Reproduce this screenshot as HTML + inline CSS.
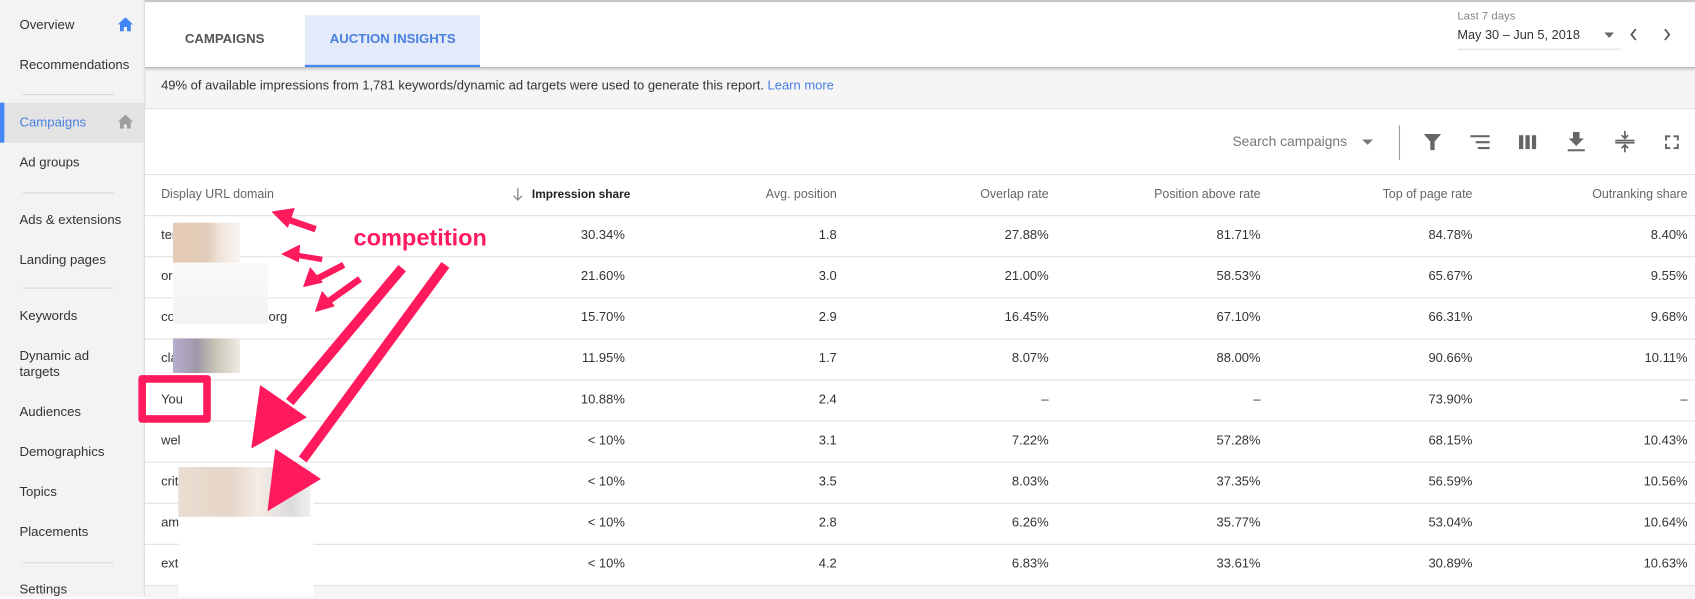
<!DOCTYPE html>
<html><head><meta charset="utf-8"><style>
*{margin:0;padding:0;box-sizing:border-box}
html,body{width:1695px;height:596px;overflow:hidden;background:#fff}
#w{position:absolute;left:0;top:0;width:1568px;height:552px;transform:scale(1.0811);transform-origin:0 0;font-family:"Liberation Sans",Arial,sans-serif;color:#333}
.a{position:absolute;white-space:nowrap;line-height:14px}
#side{position:absolute;left:0;top:0;width:134px;height:552px;background:#f3f3f3;border-right:1px solid #dadada}
.si{position:absolute;left:18px;font-size:12.2px;color:#333;line-height:15px;white-space:nowrap}
.dv{position:absolute;left:21px;width:84px;height:1px;background:#d6d6d6}
.hd{font-size:11.5px;color:#666}
.c{font-size:12px;color:#333;text-align:right}
.rl{position:absolute;left:134px;right:0;height:1px;background:#e0e0e0}
</style></head><body><div id="w">
<div id="side">
<div class="si" style="top:16px">Overview</div>
<svg class="a" style="left:109px;top:16px" width="14" height="13" viewBox="0 0 14 13"><path d="M7 0L0 6.5h2V13h3.5V9h3v4H12V6.5h2z" fill="#4285f4"/></svg>
<div class="si" style="top:53px">Recommendations</div>
<div class="dv" style="top:87px"></div>
<div style="position:absolute;left:0;top:95px;width:133px;height:37px;background:#e3e3e3;border-left:4px solid #4285f4"></div>
<div class="si" style="top:106px;color:#4a7fe0">Campaigns</div>
<svg class="a" style="left:109px;top:106px" width="14" height="13" viewBox="0 0 14 13"><path d="M7 0L0 6.5h2V13h3.5V9h3v4H12V6.5h2z" fill="#9e9e9e"/></svg>
<div class="si" style="top:143px">Ad groups</div>
<div class="dv" style="top:178px"></div>
<div class="si" style="top:196px">Ads &amp; extensions</div>
<div class="si" style="top:233px">Landing pages</div>
<div class="dv" style="top:266px"></div>
<div class="si" style="top:285px">Keywords</div>
<div class="si" style="top:322px">Dynamic ad<br>targets</div>
<div class="si" style="top:374px">Audiences</div>
<div class="si" style="top:411px">Demographics</div>
<div class="si" style="top:448px">Topics</div>
<div class="si" style="top:485px">Placements</div>
<div class="dv" style="top:520px"></div>
<div class="si" style="top:538px">Settings</div>
</div>

<div class="a" style="left:134px;top:0;right:0;height:2px;background:#c8c8c8"></div>
<div class="a" style="left:134px;top:62px;right:0;height:39px;background:#f5f5f5;border-top:1px solid #bbb;box-shadow:inset 0 2px 2px rgba(0,0,0,.12);border-bottom:1px solid #e0e0e0"></div>
<div class="a" style="left:171px;top:29px;font-size:12.2px;color:#555;font-weight:bold">CAMPAIGNS</div>
<div class="a" style="left:282px;top:14px;width:162px;height:48px;background:#e3ebfa;border-bottom:2px solid #4285f4"></div>
<div class="a" style="left:305px;top:29px;font-size:12.2px;color:#4a7fe0;font-weight:bold">AUCTION INSIGHTS</div>
<div class="a" style="left:1348px;top:8px;font-size:10.5px;color:#888">Last 7 days</div>
<div class="a" style="left:1348px;top:25px;font-size:11.8px;color:#333">May 30 – Jun 5, 2018</div>
<div class="a" style="left:1348px;top:45px;width:151px;height:1px;background:#ddd"></div>
<svg class="a" style="left:1484px;top:30px" width="9" height="5"><path d="M0 0h9L4.5 5z" fill="#666"/></svg>
<svg class="a" style="left:1506px;top:25px" width="10" height="14"><path d="M7 2L3 7l4 5" stroke="#555" stroke-width="1.6" fill="none"/></svg>
<svg class="a" style="left:1537px;top:25px" width="10" height="14"><path d="M3 2l4 5-4 5" stroke="#555" stroke-width="1.6" fill="none"/></svg>
<div class="a" style="left:149px;top:72px;font-size:12px;color:#333">49% of available impressions from 1,781 keywords/dynamic ad targets were used to generate this report. <span style="color:#4a7fe0">Learn more</span></div>

<div class="a" style="left:1140px;top:124px;font-size:12.8px;color:#777">Search campaigns</div>
<svg class="a" style="left:1260px;top:129px" width="10" height="5"><path d="M0 0h10L5 5z" fill="#777"/></svg>
<div class="a" style="left:1294px;top:116px;width:1px;height:32px;background:#999"></div>
<svg class="a" style="left:1317px;top:124px" width="16" height="15"><path d="M0 0h16l-6 7v8h-4V7z" fill="#666"/></svg>
<svg class="a" style="left:1360px;top:125px" width="18" height="13"><path d="M0 1h18M5 6.5h13M7 12h11" stroke="#666" stroke-width="2"/></svg>
<svg class="a" style="left:1405px;top:125px" width="16" height="13"><path d="M0 0h4v13H0zM6 0h4v13H6zM12 0h4v13h-4z" fill="#666"/></svg>
<svg class="a" style="left:1450px;top:122px" width="16" height="18"><path d="M5 0h6v6h4l-7 7-7-7h4z M0 16h16v2H0z" fill="#666"/></svg>
<svg class="a" style="left:1494px;top:121px" width="18" height="20"><path d="M0 9h18M0 11h18M9 0v6M6 4l3 3 3-3M9 20v-6M6 16l3-3 3 3" stroke="#666" stroke-width="1.6" fill="none"/></svg>
<svg class="a" style="left:1540px;top:125px" width="13" height="13"><path d="M1 5V1h4M8 1h4v4M12 8v4H8M5 12H1V8" stroke="#666" stroke-width="1.8" fill="none"/></svg>

<div class="rl" style="top:161px"></div>
<div class="a hd" style="left:149px;top:173px">Display URL domain</div>
<svg class="a" style="left:474px;top:174px" width="10" height="12"><path d="M5 0v11M1 7l4 4 4-4" stroke="#888" stroke-width="1.2" fill="none"/></svg>
<div class="a hd" style="left:492px;top:173px;color:#222;font-weight:bold;font-size:11px">Impression share</div>
<div class="a hd" style="right:794px;top:173px">Avg. position</div>
<div class="a hd" style="right:598px;top:173px">Overlap rate</div>
<div class="a hd" style="right:402px;top:173px">Position above rate</div>
<div class="a hd" style="right:206px;top:173px">Top of page rate</div>
<div class="a hd" style="right:7px;top:173px">Outranking share</div>

<div id="rows"></div>
<script>
var d=[["ter","30.34%","1.8","27.88%","81.71%","84.78%","8.40%"],["or","21.60%","3.0","21.00%","58.53%","65.67%","9.55%"],["co                         .org","15.70%","2.9","16.45%","67.10%","66.31%","9.68%"],["cla","11.95%","1.7","8.07%","88.00%","90.66%","10.11%"],["You","10.88%","2.4","–","–","73.90%","–"],["wel","< 10%","3.1","7.22%","57.28%","68.15%","10.43%"],["crit","< 10%","3.5","8.03%","37.35%","56.59%","10.56%"],["am","< 10%","2.8","6.26%","35.77%","53.04%","10.64%"],["ext","< 10%","4.2","6.83%","33.61%","30.89%","10.63%"]];
var r=[990,794,598,402,206,7],h="";
d.forEach(function(x,i){var t=199+i*38;h+='<div class="rl" style="top:'+t+'px"></div>';
h+='<div class="a c" style="left:149px;top:'+(t+11)+'px;text-align:left;white-space:pre">'+x[0]+'</div>';
for(var j=1;j<7;j++)h+='<div class="a c" style="right:'+r[j-1]+'px;top:'+(t+11)+'px">'+x[j]+'</div>';});
h+='<div class="rl" style="top:541px"></div><div class="a" style="left:134px;top:542px;right:0;height:12px;background:#f5f5f5"></div>';
document.getElementById("rows").innerHTML=h;
</script>

<div class="a" style="left:160px;top:206px;width:62px;height:37px;background:linear-gradient(90deg,#e6cdb8 0,#e2cbb8 50%,#f0e4da 70%,#f8f4f0 100%)"></div>
<div class="a" style="left:160px;top:243px;width:88px;height:57px;background:linear-gradient(#fafafa,#f2f2f2)"></div>
<div class="a" style="left:160px;top:313px;width:62px;height:32px;background:linear-gradient(90deg,#b9aece 0,#9f98a8 35%,#c9c7b5 65%,#eeeae6 100%)"></div>
<div class="a" style="left:165px;top:452px;width:125px;height:100px;background:#fff"></div>
<div class="a" style="left:165px;top:432px;width:122px;height:46px;background:linear-gradient(90deg,#eadcd0 0,#e6d6c9 40%,#f4ece5 60%,#dcdbdc 85%,#eef0f0 100%)"></div>

<div class="a" style="left:128px;top:347px;width:67px;height:44px;border:7px solid #ff1a5e;border-radius:3px;background:#fff"></div>
<div class="a" style="left:149px;top:362px;font-size:12px">You</div>

<svg class="a" style="left:0;top:0" width="1568" height="552">
<g fill="#ff1a5e" stroke="#ff1a5e" stroke-linejoin="round">
<path d="M292 212L266 203" stroke-width="6"/><path d="M252 196l20-3-6 17z"/>
<path d="M298 240L274 236" stroke-width="5"/><path d="M261 235l16-8-1 15z"/>
<path d="M318 245L293 258" stroke-width="6"/><path d="M281 265l6-17 11 13z"/>
<path d="M333 258L305 278" stroke-width="6"/><path d="M292 288l6-18 11 13z"/>
<path d="M372 248L268 372" stroke-width="9"/><path d="M233 414l8-57 42 29z"/>
<path d="M412 245L280 425" stroke-width="9"/><path d="M248 472l7-56 41 27z"/>
</g>
<text x="327" y="227" font-family="Liberation Sans,sans-serif" font-weight="bold" font-size="21.8" fill="#ff1a5e" stroke="#fff" stroke-width="3" paint-order="stroke">competition</text>
</svg>
</div></body></html>
